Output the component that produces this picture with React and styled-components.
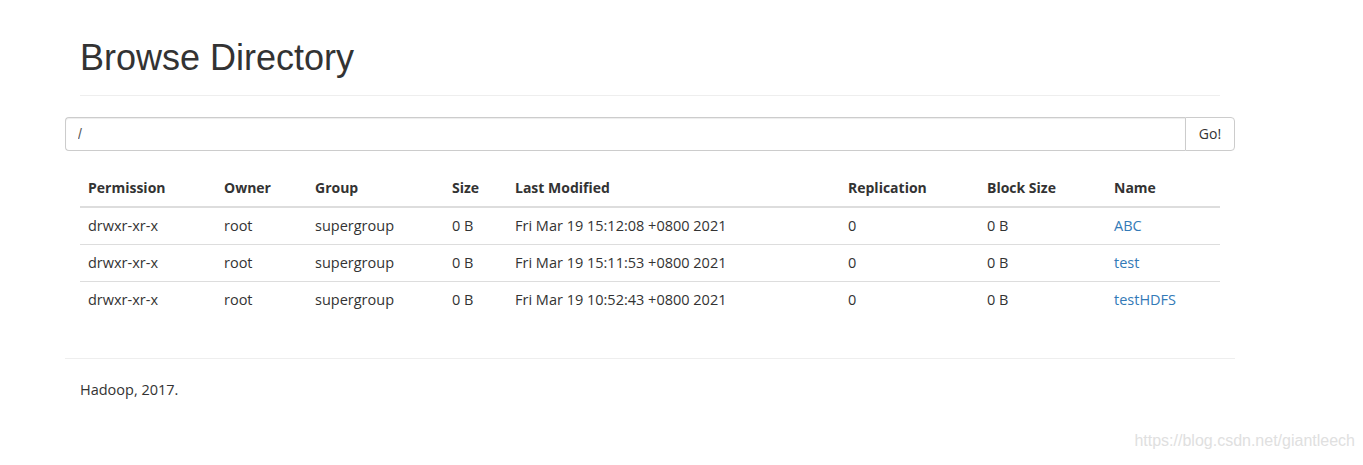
import React from 'react'
import styled, { createGlobalStyle } from 'styled-components'

const GlobalStyle = createGlobalStyle`
  body {
    margin: 0;
    background: #fff;
    color: #333;
    font-family: "Open Sans", "Noto Sans", sans-serif;
    font-size: 14px;
    line-height: 1.42857;
  }
`

const Page = styled.div`
  position: relative;
  box-sizing: border-box;
  min-height: 465px;
  padding-top: 38px;
`

const Container = styled.div`
  width: 1170px;
  margin-left: 65px;
  box-sizing: border-box;
`

const Inner = styled.div`
  padding: 0 15px;
`

const Header = styled.div`
  padding-bottom: 9px;
  border-bottom: 1px solid #eee;
`

const Title = styled.h1`
  margin: 0 0 8px;
  font-family: "Liberation Sans", Arial, sans-serif;
  font-size: 36px;
  font-weight: 500;
  line-height: 1.1;
  color: #333;
`

const InputGroup = styled.div`
  display: flex;
  margin-top: 21px;
  height: 34px;
`

const PathInput = styled.input`
  flex: 1;
  box-sizing: border-box;
  height: 34px;
  padding: 6px 12px;
  border: 1px solid #ccc;
  border-right: none;
  border-radius: 4px 0 0 4px;
  font-family: "Liberation Sans", Arial, sans-serif;
  font-size: 14px;
  color: #555;
  outline: none;
  box-shadow: inset 0 1px 1px rgba(0, 0, 0, 0.075);
`

const GoButton = styled.button`
  width: 50px;
  height: 34px;
  box-sizing: border-box;
  border: 1px solid #ccc;
  border-radius: 0 4px 4px 0;
  background: #fff;
  color: #333;
  font-family: "Open Sans", "Noto Sans", sans-serif;
  font-size: 14px;
  padding: 0;
`

const Table = styled.table`
  width: 100%;
  margin-top: 19px;
  border-collapse: collapse;
  border-spacing: 0;
  table-layout: fixed;
  font-size: 14px;
`

const Th = styled.th`
  box-sizing: border-box;
  width: ${p => p.w}px;
  text-align: left;
  padding: 8px;
  line-height: 20px;
  font-weight: 700;
  color: #333;
  border-bottom: 2px solid #ddd;
  vertical-align: bottom;
`

const Td = styled.td`
  padding: 8px;
  line-height: 20px;
  font-size: 14.5px;
  color: #333;
  border-top: ${p => (p.first ? 'none' : '1px solid #ddd')};
  white-space: nowrap;
`

const Link = styled.a`
  color: #337ab7;
  text-decoration: none;
`

const Rule = styled.hr`
  margin: 40px 0 0;
  border: 0;
  border-top: 1px solid #eee;
`

const Footer = styled.p`
  margin: 21px 0 0;
  padding: 0 15px;
  font-size: 14.5px;
`

const Watermark = styled.div`
  position: absolute;
  right: 8px;
  top: 430px;
  font-family: "Liberation Sans", Arial, sans-serif;
  font-size: 16px;
  color: #e0e0e0;
`

const columns = [
  ['Permission', 136],
  ['Owner', 91],
  ['Group', 137],
  ['Size', 63],
  ['Last Modified', 333],
  ['Replication', 139],
  ['Block Size', 127],
  ['Name', 114],
]

const rows = [
  ['drwxr-xr-x', 'root', 'supergroup', '0 B', 'Fri Mar 19 15:12:08 +0800 2021', '0', '0 B', 'ABC'],
  ['drwxr-xr-x', 'root', 'supergroup', '0 B', 'Fri Mar 19 15:11:53 +0800 2021', '0', '0 B', 'test'],
  ['drwxr-xr-x', 'root', 'supergroup', '0 B', 'Fri Mar 19 10:52:43 +0800 2021', '0', '0 B', 'testHDFS'],
]

export default function App() {
  return (
    <Page>
      <GlobalStyle />
      <Container>
        <Inner>
          <Header>
            <Title>Browse Directory</Title>
          </Header>
        </Inner>
        <InputGroup>
          <PathInput defaultValue="/" />
          <GoButton>Go!</GoButton>
        </InputGroup>
        <Inner>
          <Table>
            <thead>
              <tr>
                {columns.map(([label, w]) => (
                  <Th key={label} w={w}>{label}</Th>
                ))}
              </tr>
            </thead>
            <tbody>
              {rows.map((row, i) => (
                <tr key={i}>
                  {row.map((cell, j) => (
                    <Td key={j} first={i === 0}>
                      {j === 7 ? <Link href="#">{cell}</Link> : cell}
                    </Td>
                  ))}
                </tr>
              ))}
            </tbody>
          </Table>
        </Inner>
        <Rule />
        <Footer>Hadoop, 2017.</Footer>
      </Container>
      <Watermark>https://blog.csdn.net/giantleech</Watermark>
    </Page>
  )
}
